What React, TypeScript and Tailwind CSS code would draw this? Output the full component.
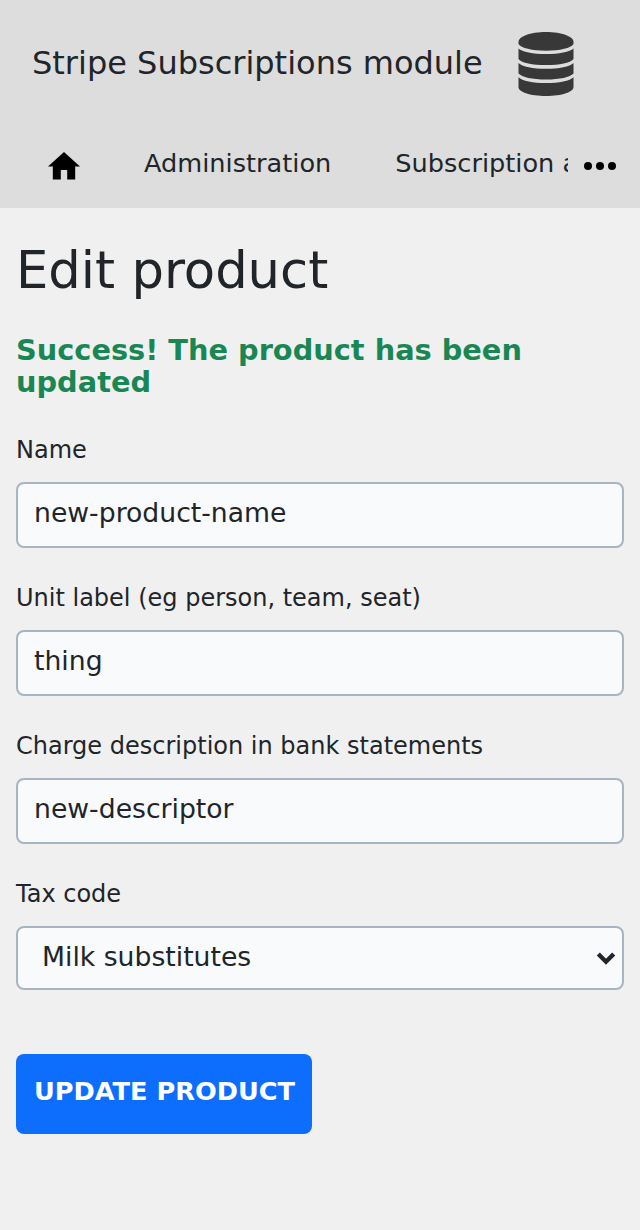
import type { ReactNode } from 'react';

function Field({ label, children }: { label: string; children: ReactNode }) {
  return (
    <label className="mb-8 block">
      <span className="mb-4 block h-[34px] text-[24px] leading-9">{label}</span>
      {children}
    </label>
  );
}

const box =
  'block w-full rounded-lg border-2 border-[#a7b4c2] bg-[#f8fafc] text-[26.66px] text-[#212529] outline-none appearance-none';

export default function App() {
  return (
    <div className="h-[1230px] w-full overflow-hidden bg-[#f0f0f0] font-['DejaVu_Sans',sans-serif] text-[#212529]">
      <header className="h-52 bg-[#ddd]">
        <div className="flex h-32 items-center pl-8">
          <span className="w-[486px] whitespace-nowrap pb-0.5 text-[32px] leading-none">Stripe Subscriptions module</span>
          <svg width="56" height="64" viewBox="0 0 56 64" fill="#383838">
            <path d="M.5 10C.5 4.500 12 0 28 0s27.500 4.500 27.500 10v2C53 16 42 18.700 28 18.700S3 16 .5 12z" />
            <path d="M.5 16.500C4 20 15 22 28 22S52 20 55.500 16.500V27C52 31 42 33 28 33S4 31 .5 27z" />
            <path d="M.5 31C4 34.800 15 36.800 28 36.800S52 34.800 55.500 31v10.500C52 45.300 42 47.500 28 47.500S4 45.300 .5 41.500z" />
            <path d="M.5 45.200C4 49 15 51 28 51S52 49 55.500 45.200v10C55.500 59.700 44 64 28 64S.5 59.700 .5 55.200z" />
          </svg>
        </div>
        <nav className="flex h-20 items-start pl-12 text-[25.6px] leading-[70px]">
          <svg className="mt-[24px] shrink-0" width="32" height="28" viewBox="0 0 32 28">
            <path d="M12.8 27.500v-9.600h6.400v9.600h8V14.400H32L16 0 0 14.400h4.800v13.100z" />
          </svg>
          <span className="ml-16">Administration</span>
          <span className="ml-16 w-[173px] overflow-hidden whitespace-nowrap">Subscription admin</span>
          <svg className="ml-4 mt-[34px] shrink-0" width="32" height="8" viewBox="0 0 32 8">
            <circle cx="4" cy="4" r="4" /><circle cx="16" cy="4" r="4" /><circle cx="28" cy="4" r="4" />
          </svg>
        </nav>
      </header>
      <main className="px-4 pt-8">
        <h1 className="text-[51.2px] leading-[60px]">Edit product</h1>
        <h2 className="mt-[34px] text-[28.8px] font-bold leading-8 text-[#198754]">Success! The product has been updated</h2>
        <form className="mt-[34px]">
          <Field label="Name"><input className={`${box} h-[66px] px-4 pb-1.5`} defaultValue="new-product-name" /></Field>
          <Field label="Unit label (eg person, team, seat)"><input className={`${box} h-[66px] px-4 pb-1.5`} defaultValue="thing" /></Field>
          <Field label="Charge description in bank statements"><input className={`${box} h-[66px] px-4 pb-1.5`} defaultValue="new-descriptor" /></Field>
          <Field label="Tax code">
            <span className="relative block">
              <select className={`${box} h-16 px-6 pb-0.5`}><option>Milk substitutes</option></select>
              <svg className="pointer-events-none absolute right-2 top-[26px]" width="20" height="14" viewBox="0 0 20 14" fill="none" stroke="#212529" strokeWidth="4.4">
                <path d="M2.300 2l7.700 7.700 7.700-7.700" />
              </svg>
            </span>
          </Field>
          <button type="button" className="mt-8 h-20 w-[296px] whitespace-nowrap rounded-lg bg-[#0d6efd] pb-1.5 pl-px text-[25.6px] font-bold text-white">UPDATE PRODUCT</button>
        </form>
      </main>
    </div>
  );
}
